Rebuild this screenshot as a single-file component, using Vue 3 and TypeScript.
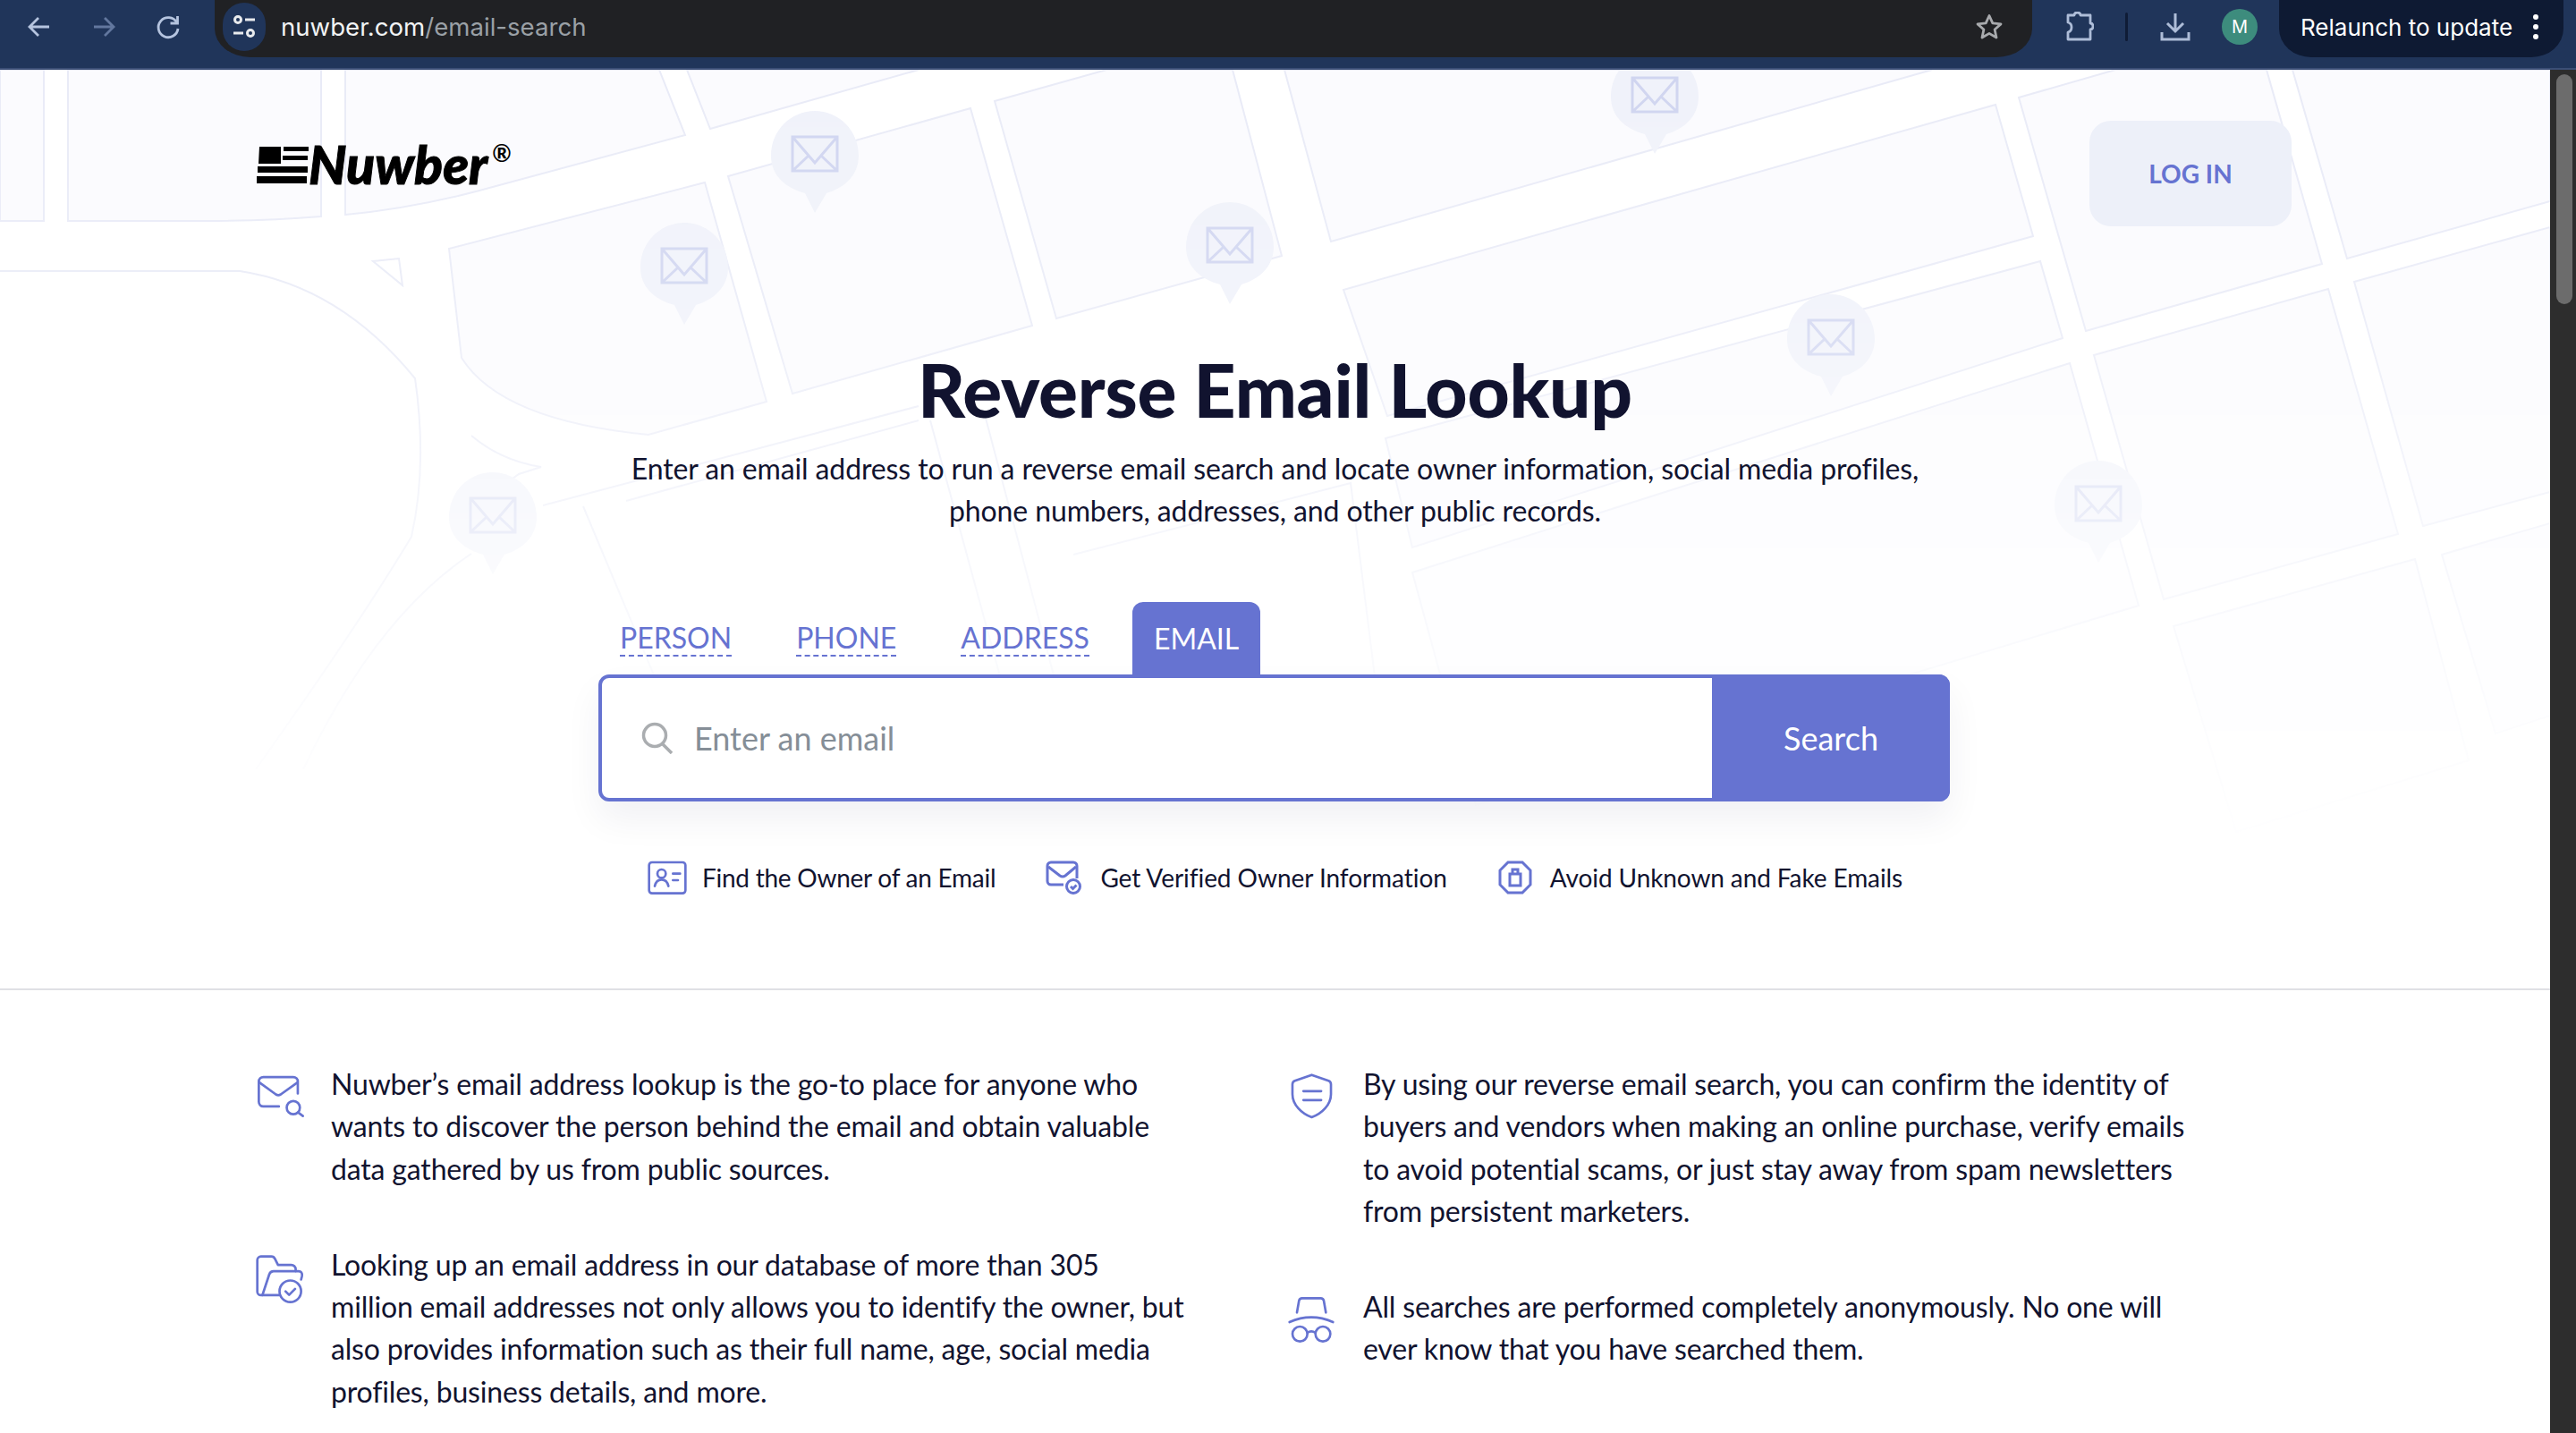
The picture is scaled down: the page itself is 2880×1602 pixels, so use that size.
<script setup lang="ts">
const blocks: string[] = [
  'M0 78H49V247H0Z',
  'M76 78H359V242Q300 247 230 247H76Z',
  'M386 78H737L766 151L536 213Q460 233 386 240Z',
  'M768 78H1027L794 144Z',
  'M814 197L1085 121L1154 364L886 440Z',
  'M788 204L857 449L725 486Q560 470 516 400L502 278Z',
  'M1112 113L1237 78H1378L1433 286L1181 356Z',
  'M1436 78H2160L1488 270Z',
  'M1502 324L2231 117L2273 264L1551 465Z',
  'M2257 109L2365 78H2534L2596 295L2332 370Z',
  'M2563 78H2851V225L2624 289Z',
  'M1549 490L2281 292L2306 378L1579 612Z',
  'M2341 397L2603 323L2681 597L2419 670Z',
  'M2632 315L2851 254V550L2709 588Z',
  'M1579 640L2314 406L2391 677L1650 900Z',
  'M2430 700L2700 625L2760 850L2500 930Z',
  'M2730 620L2851 585V800L2790 820Z',
]
const lines: string[] = [
  'M0 303H268Q380 320 464 423Q478 520 460 600Q400 700 286 860',
  'M417 292L446 289L450 319Z',
  'M527 487Q560 515 605 522L580 530L525 570',
  'M527 619Q420 690 339 860',
  'M652 566L750 800',
  'M607 565L1027 454',
  'M1040 470L1130 800',
  'M1100 460L1190 800',
  'M700 560L1027 470',
  'M1200 620L1510 540L1540 780',
]
const pins = [
  { x: 862, y: 124 },
  { x: 716, y: 249 },
  { x: 502, y: 528 },
  { x: 1326, y: 226 },
  { x: 1801, y: 58 },
  { x: 1998, y: 329 },
  { x: 2297, y: 515 },
]
const tabs = ['PERSON', 'PHONE', 'ADDRESS']
</script>

<template>
  <div class="app">
    <header class="toolbar">
      <div class="nav">
        <svg class="navicon" viewBox="0 0 32 32"><path d="M27 16H6M15 6L5 16l10 10" /></svg>
        <svg class="navicon dim" viewBox="0 0 32 32"><path d="M5 16h21M17 6l10 10-10 10" /></svg>
        <svg class="navicon" viewBox="0 0 32 32"><path d="M25.5 11A11 11 0 1 0 27 18" /><path d="M26.500 4v8h-8" /></svg>
      </div>
      <div class="address">
        <span class="site">
          <svg viewBox="0 0 28 28" width="28" height="28"><circle cx="7" cy="6" r="3.500" /><path d="M15 6h11M2 21h11" /><circle cx="21" cy="21" r="3.500" /></svg>
        </span>
        <span class="url">nuwber.com<span class="path">/email-search</span></span>
        <svg class="star" viewBox="0 0 32 32"><path d="M16 3.500l3.800 8.400 9.200 1-6.900 6.100 1.900 9-8-4.600L8 28l1.900-9L3 12.900l9.200-1z" /></svg>
      </div>
      <svg class="puzzle" viewBox="0 0 34 34"><path d="M5 4H12Q12 1 15.500 1T19 4H30V13Q33 13 33 16.500T30 20V31H5V23Q9 22 9 17.500T5 12Z" /></svg>
      <span class="divider"></span>
      <svg class="download" viewBox="0 0 34 34"><path d="M17 2V21M8 13l9 9 9-9M2 23v8h30v-8" /></svg>
      <span class="avatar">M</span>
      <div class="relaunch">
        <span>Relaunch to update</span>
        <span class="dots"><i></i><i></i><i></i></span>
      </div>
    </header>

    <div class="viewport">
      <main class="page">
        <section class="hero">
          <svg class="map" viewBox="0 78 2851 1029" width="2851" height="1029" aria-hidden="true">
            <path v-for="b in blocks" :key="b" class="block" :d="b" />
            <path v-for="l in lines" :key="l" class="road" :d="l" />
            <g v-for="p in pins" :key="p.x" :transform="`translate(${p.x} ${p.y})`">
              <path class="pin" d="M49 0C76 0 98 22 98 50C98 72 82 86 62 92L49 114L38 92C16 86 0 72 0 50C0 22 22 0 49 0Z" />
              <path class="env" d="M24 29H74V67H24ZM24 29L49 58L74 29M24 67L42 50M74 67L56 50" />
            </g>
          </svg>

          <div class="topbar">
            <div class="logo">
              <svg class="mark" viewBox="0 0 58 41" width="58" height="41">
                <path d="M3 0H27V19H2ZM30 0H58V5H30ZM29 10H57V15H29ZM1 22H57V29H1ZM0 33H56V41H0Z" />
              </svg>
              <span class="wordmark">Nuwber</span>
              <span class="reg">®</span>
            </div>
            <a class="login">LOG IN</a>
          </div>

          <h1>Reverse Email Lookup</h1>
          <p class="sub">Enter an email address to run a reverse email search and locate owner information, social media profiles,<br />phone numbers, addresses, and other public records.</p>

          <div class="searcher">
            <nav class="tabs">
              <a v-for="t in tabs" :key="t" class="tab"><span>{{ t }}</span></a>
              <a class="tab active"><span>EMAIL</span></a>
            </nav>
            <div class="box">
              <div class="field">
                <svg class="glass" viewBox="0 0 36 36"><circle cx="15" cy="15" r="12.500" /><path d="M24 25l10 10" /></svg>
                <span class="placeholder">Enter an email</span>
              </div>
              <button class="go">Search</button>
            </div>
          </div>

          <ul class="features">
            <li>
              <svg class="ficon card" viewBox="64 41 130 114" width="44" height="38"><rect x="68" y="47" width="122" height="104" rx="10" /><circle cx="110" cy="85" r="14" /><path d="M87 127q5-22 23-22q18 0 23 22M148 85H172M148 107H165" /></svg>
              Find the Owner of an Email
            </li>
            <li>
              <svg class="ficon" viewBox="0 0 40 38" width="40" height="38"><path d="M20 27H6a4 4 0 0 1-4-4V6a4 4 0 0 1 4-4h25a4 4 0 0 1 4 4v14" /><path d="M3 7l13 10q3 2 6 0L34 7" /><circle cx="31" cy="29" r="7.500" /><path d="M28 29l2.500 2.500 4-4" /></svg>
              Get Verified Owner Information
            </li>
            <li>
              <svg class="ficon" viewBox="0 0 40 38" width="40" height="38"><path d="M12 2H28L37 11V27L28 36H12L3 27V11Z" /><path d="M14 15H26V28H14ZM17 15V10H23V15" /></svg>
              Avoid Unknown and Fake Emails
            </li>
          </ul>
        </section>

        <section class="about">
          <div class="col">
            <div class="point">
              <svg class="picon" viewBox="80 95 170 155" width="57" height="52"><path d="M160 208H108a15 15 0 0 1-15-15V125a15 15 0 0 1 15-15H208a15 15 0 0 1 15 15V165" /><path d="M95 128L150 168Q158 173 166 168L222 128" /><circle cx="208" cy="212" r="22" /><path d="M224 228L240 240" /></svg>
              <p>Nuwber’s email address lookup is the go-to place for anyone who wants to discover the person behind the email and obtain valuable data gathered by us from public sources.</p>
            </div>
            <div class="point">
              <svg class="picon" viewBox="80 695 170 170" width="57" height="57"><path d="M105 835H100a12 12 0 0 1-12-12V718a12 12 0 0 1 12-12H135q8 0 12 8l10 20H200a15 15 0 0 1 16 16V755" /><path d="M160 835H105L128 765q4-10 14-10H225q14 0 12 16l-3 12" /><circle cx="198" cy="822" r="36" /><path d="M182 822l12 12l20-20" /></svg>
              <p>Looking up an email address in our database of more than 305 million email addresses not only allows you to identify the owner, but also provides information such as their full name, age, social media profiles, business details, and more.</p>
            </div>
          </div>
          <div class="col right">
            <div class="point">
              <svg class="picon" viewBox="100 92 146 160" width="49" height="53"><path d="M173 100L230 120q8 3 8 12V165c0 35-30 65-65 78c-35-13-65-43-65-78V132q0-9 8-12Z" /><path d="M145 155H205M145 185H205" /></svg>
              <p>By using our reverse email search, you can confirm the identity of buyers and vendors when making an online purchase, verify emails to avoid potential scams, or just stay away from spam newsletters from persistent marketers.</p>
            </div>
            <div class="point">
              <svg class="picon hat" viewBox="92 842 162 162" width="54" height="54"><path d="M100 932Q173 900 246 932M125 900L132 860q2-8 10-8H205q8 0 10 8L222 900M160 968Q173 958 187 968" /><circle cx="135" cy="972" r="25" /><circle cx="212" cy="972" r="25" /></svg>
              <p>All searches are performed completely anonymously. No one will ever know that you have searched them.</p>
            </div>
          </div>
        </section>
      </main>
      <aside class="scrollbar"><span class="thumb"></span></aside>
    </div>
  </div>
</template>

<style>
html, body { margin: 0; background: #fff; overflow: hidden; }
</style>

<style scoped>
.app { width: 2880px; height: 1602px; display: flex; flex-direction: column; overflow: hidden; font-family: Lato, sans-serif; color: #11132f; }

.toolbar { height: 76px; flex: none; display: flex; align-items: flex-start; background: #20355a; border-bottom: 2px solid #3b4e75; padding-left: 8px; font-family: Inter, Roboto, sans-serif; box-sizing: content-box; }
.nav { display: flex; width: 216px; height: 60px; align-items: center; }
.navicon { width: 32px; height: 32px; margin: 0 20px; fill: none; stroke: #b5c4df; stroke-width: 2.800; }
.navicon.dim { stroke: #62779e; }
.address { width: 2032px; height: 64px; margin-left: 16px; display: flex; align-items: center; background: #202124; border-radius: 0 0 40px 40px / 0 0 32px 32px; padding: 0 32px 4px 9px; box-sizing: border-box; }
.site { width: 48px; height: 54px; border-radius: 27px; background: #20355a; display: flex; align-items: center; justify-content: center; flex: none; }
.site svg { fill: none; stroke: #e8eaed; stroke-width: 3; }
.url { margin-left: 17px; font-size: 27.600px; color: #f1f3f4; flex: 1; white-space: nowrap; }
.path { color: #9aa0a6; }
.star { width: 32px; height: 32px; fill: none; stroke: #a8aaad; stroke-width: 2.800; stroke-linejoin: round; }
.puzzle { width: 34px; height: 34px; margin: 13px 0 0 35px; fill: none; stroke: #aebdd8; stroke-width: 2.800; stroke-linejoin: round; }
.divider { width: 3px; height: 32px; margin: 14px 0 0 35px; background: #0f1c36; border-radius: 2px; }
.download { width: 34px; height: 34px; margin: 13px 0 0 36px; fill: none; stroke: #aebdd8; stroke-width: 3; }
.avatar { width: 40px; height: 40px; margin: 10px 0 0 35px; border-radius: 50%; background: #3d8c7d; color: #fff; font-size: 20px; display: flex; align-items: center; justify-content: center; }
.relaunch { width: 318px; height: 64px; margin-left: 24px; box-sizing: border-box; padding: 0 24px 4px; border-radius: 0 0 36px 36px / 0 0 32px 32px; background: #0e1a33; color: #fff; font-size: 26px; display: flex; align-items: center; justify-content: space-between; white-space: nowrap; }
.dots { display: flex; flex-direction: column; gap: 5px; margin-right: 4px; }
.dots i { width: 6px; height: 6px; border-radius: 50%; background: #fff; display: block; }

.viewport { flex: 1; display: flex; min-height: 0; }
.page { flex: 1; min-width: 0; background: #fff; }
.scrollbar { width: 29px; flex: none; background: #2d2d2d; padding: 5px 4px 0 7px; box-sizing: border-box; }
.thumb { display: block; height: 257px; border-radius: 9px; background: #6c6c6c; }

.hero { position: relative; height: 1029px; box-sizing: border-box; border-bottom: 2px solid #dfe0e5; overflow: hidden; }
.map { position: absolute; left: 0; top: 0; -webkit-mask-image: linear-gradient(#000 0, rgba(0,0,0,.85) 25%, rgba(0,0,0,.4) 50%, rgba(0,0,0,.12) 72%, transparent 88%); mask-image: linear-gradient(#000 0, rgba(0,0,0,.85) 25%, rgba(0,0,0,.4) 50%, rgba(0,0,0,.12) 72%, transparent 88%); }
.block { fill: #fbfbfe; stroke: #e9ebf7; stroke-width: 2; }
.road { fill: none; stroke: #e9ebf7; stroke-width: 2; }
.pin { fill: #f0f2fa; }
.env { fill: none; stroke: #d0d5f0; stroke-width: 3; }

.topbar { position: relative; display: flex; justify-content: space-between; align-items: flex-start; padding: 57px 289px 0 287px; height: 175px; box-sizing: border-box; }
.logo { display: flex; align-items: flex-start; color: #000; margin-top: 29px; }
.mark { flex: none; }
.wordmark { font-family: Lato, sans-serif; font-style: italic; font-weight: 900; font-size: 59px; line-height: 40px; margin-left: 0; -webkit-text-stroke: 1px #000; }
.reg { font-family: Lato, sans-serif; font-weight: 700; font-size: 26px; line-height: 20px; margin: -3px 0 0 5px; }
.login { width: 226px; height: 118px; border-radius: 24px; background: #edf0f9; color: #6673d1; font-weight: 700; font-size: 28px; display: flex; align-items: center; justify-content: center; }

h1 { position: relative; margin: 132px 0 0; text-align: center; font-weight: 900; font-size: 82px; letter-spacing: -0.200px; line-height: 100px; color: #11132f; }
.sub { position: relative; margin: 15px 0 0; text-align: center; font-size: 32px; letter-spacing: -0.120px; line-height: 47.300px; }

.searcher { position: relative; width: 1511px; margin: 78px 0 0 669px; }
.tabs { display: flex; gap: 24px; height: 81px; }
.tab { padding: 2px 24px 0; display: flex; align-items: center; font-size: 32px; color: #6673d1; }
.tab span { line-height: 38px; border-bottom: 2px dashed #6673d1; }
.tab.active { background: #6673d1; color: #fff; border-radius: 12px 12px 0 0; }
.tab.active span { border-bottom: 0; }
.box { height: 142px; display: flex; border: 4px solid #6673d1; border-radius: 12px; box-sizing: border-box; background: #fff; box-shadow: 0 20px 40px rgba(20, 25, 60, .06); }
.field { flex: 1; display: flex; align-items: center; padding-left: 44px; }
.glass { width: 36px; height: 36px; fill: none; stroke: #aaadb0; stroke-width: 3.500; }
.placeholder { margin-left: 23px; font-size: 36px; color: #858e97; }
.go { width: 266px; margin: -4px -4px -4px 0; border: 0; background: #6673d1; color: #fff; font: 400 36px Lato, sans-serif; border-radius: 0 12px 12px 0; }

.features { position: relative; list-style: none; margin: 66px 0 0; padding: 0; display: flex; justify-content: center; gap: 56px; font-size: 28px; letter-spacing: -0.100px; }
.features li { display: flex; align-items: center; gap: 19px; }
.features li:first-child { gap: 17px; letter-spacing: -0.250px; }
.features li:nth-child(2) { gap: 21px; letter-spacing: -0.050px; }
.ficon { flex: none; fill: none; stroke: #6673d1; stroke-width: 3; }
.ficon.card { stroke-width: 8; stroke-linecap: round; }

.about { display: grid; grid-template-columns: 1042px 1000px; column-gap: 115px; padding: 81px 0 0 288px; }
.col { display: flex; flex-direction: column; gap: 60px; }
.point { display: grid; grid-template-columns: 82px 1fr; align-items: start; }
.col.right .point { grid-template-columns: 79px 1fr; }
.picon { margin: 11px 0 0 -3px; fill: none; stroke: #6673d1; stroke-width: 8; stroke-linecap: round; stroke-linejoin: round; }
.col.right .picon.hat { margin-left: -6px; }
.point p { margin: 0; font-size: 32px; letter-spacing: -0.170px; line-height: 47.300px; }
.col:not(.right) p { width: 955px; }
.col.right p { width: 935px; }
</style>
